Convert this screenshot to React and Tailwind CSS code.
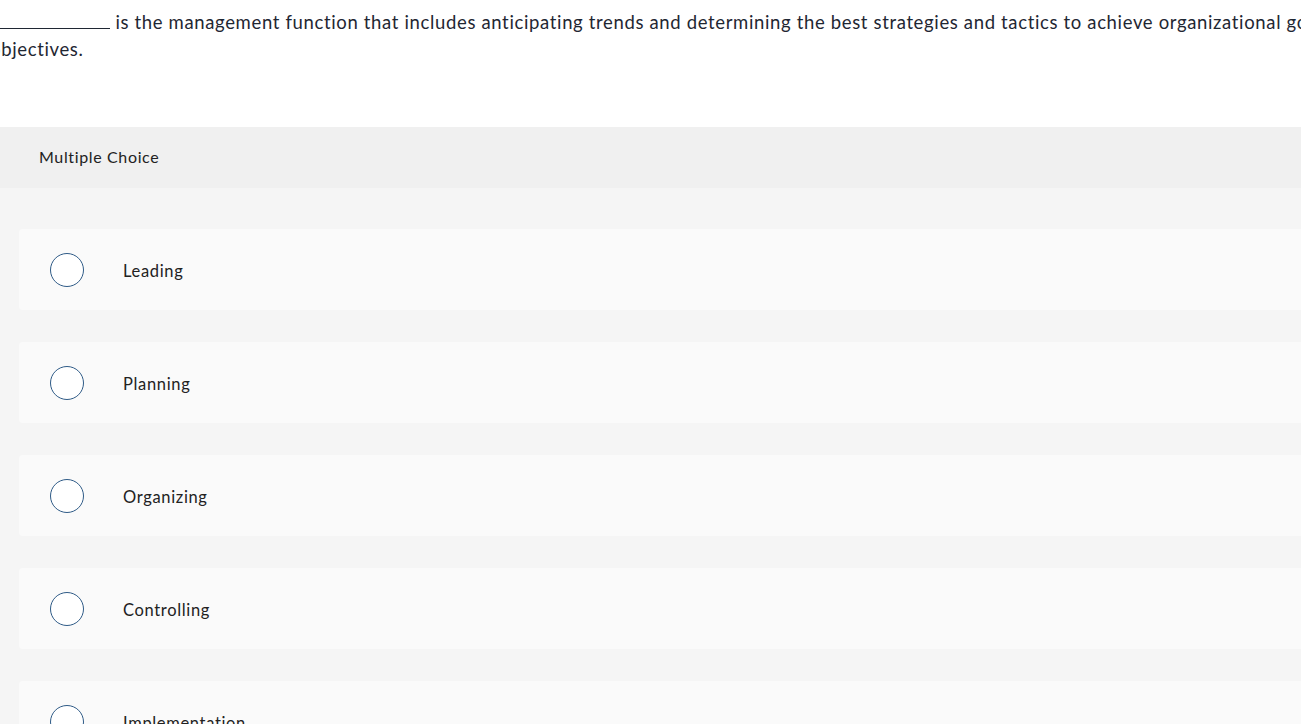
const OPTIONS = ["Leading", "Planning", "Organizing", "Controlling", "Implementation"];

function Radio() {
  return (
    <span className="w-[34px] h-[34px] shrink-0 rounded-full border-[1.5px] border-[#2f5b87] bg-white" />
  );
}

export default function App() {
  return (
    <div className="h-[724px] w-[1301px] overflow-hidden bg-white text-[#1f2733] font-['Lato','Open_Sans',sans-serif]">
      <div className="ml-[-10px] w-[1400px] pt-[9px] text-[18.5px] leading-[27px] tracking-[0.035em]">
        <div className="whitespace-nowrap">
          <span className="inline-block w-[120px] border-b border-[#1f2733] align-baseline" />
          {" "}is the management function that includes anticipating trends and determining the best strategies and tactics to achieve organizational goals and
        </div>
        <div>objectives.</div>
      </div>

      <section className="mt-[64px] w-[1340px]">
        <div className="h-[61px] bg-[#f0f0f0] pl-[39px] pb-[1px] flex items-center text-[16px] tracking-[0.04em] text-[#222]">
          Multiple Choice
        </div>
        <div className="bg-[#f5f5f5] pt-[41px] pl-[19px] flex flex-col gap-[32px]">
          {OPTIONS.map((label) => (
            <div
              key={label}
              className="h-[81px] rounded-[4px] bg-[#fafafa] flex items-center pl-[31px] gap-[39px]"
            >
              <Radio />
              <span className="pt-[3px] text-[16.5px] tracking-[0.04em] text-[#222]">{label}</span>
            </div>
          ))}
        </div>
      </section>
    </div>
  );
}
